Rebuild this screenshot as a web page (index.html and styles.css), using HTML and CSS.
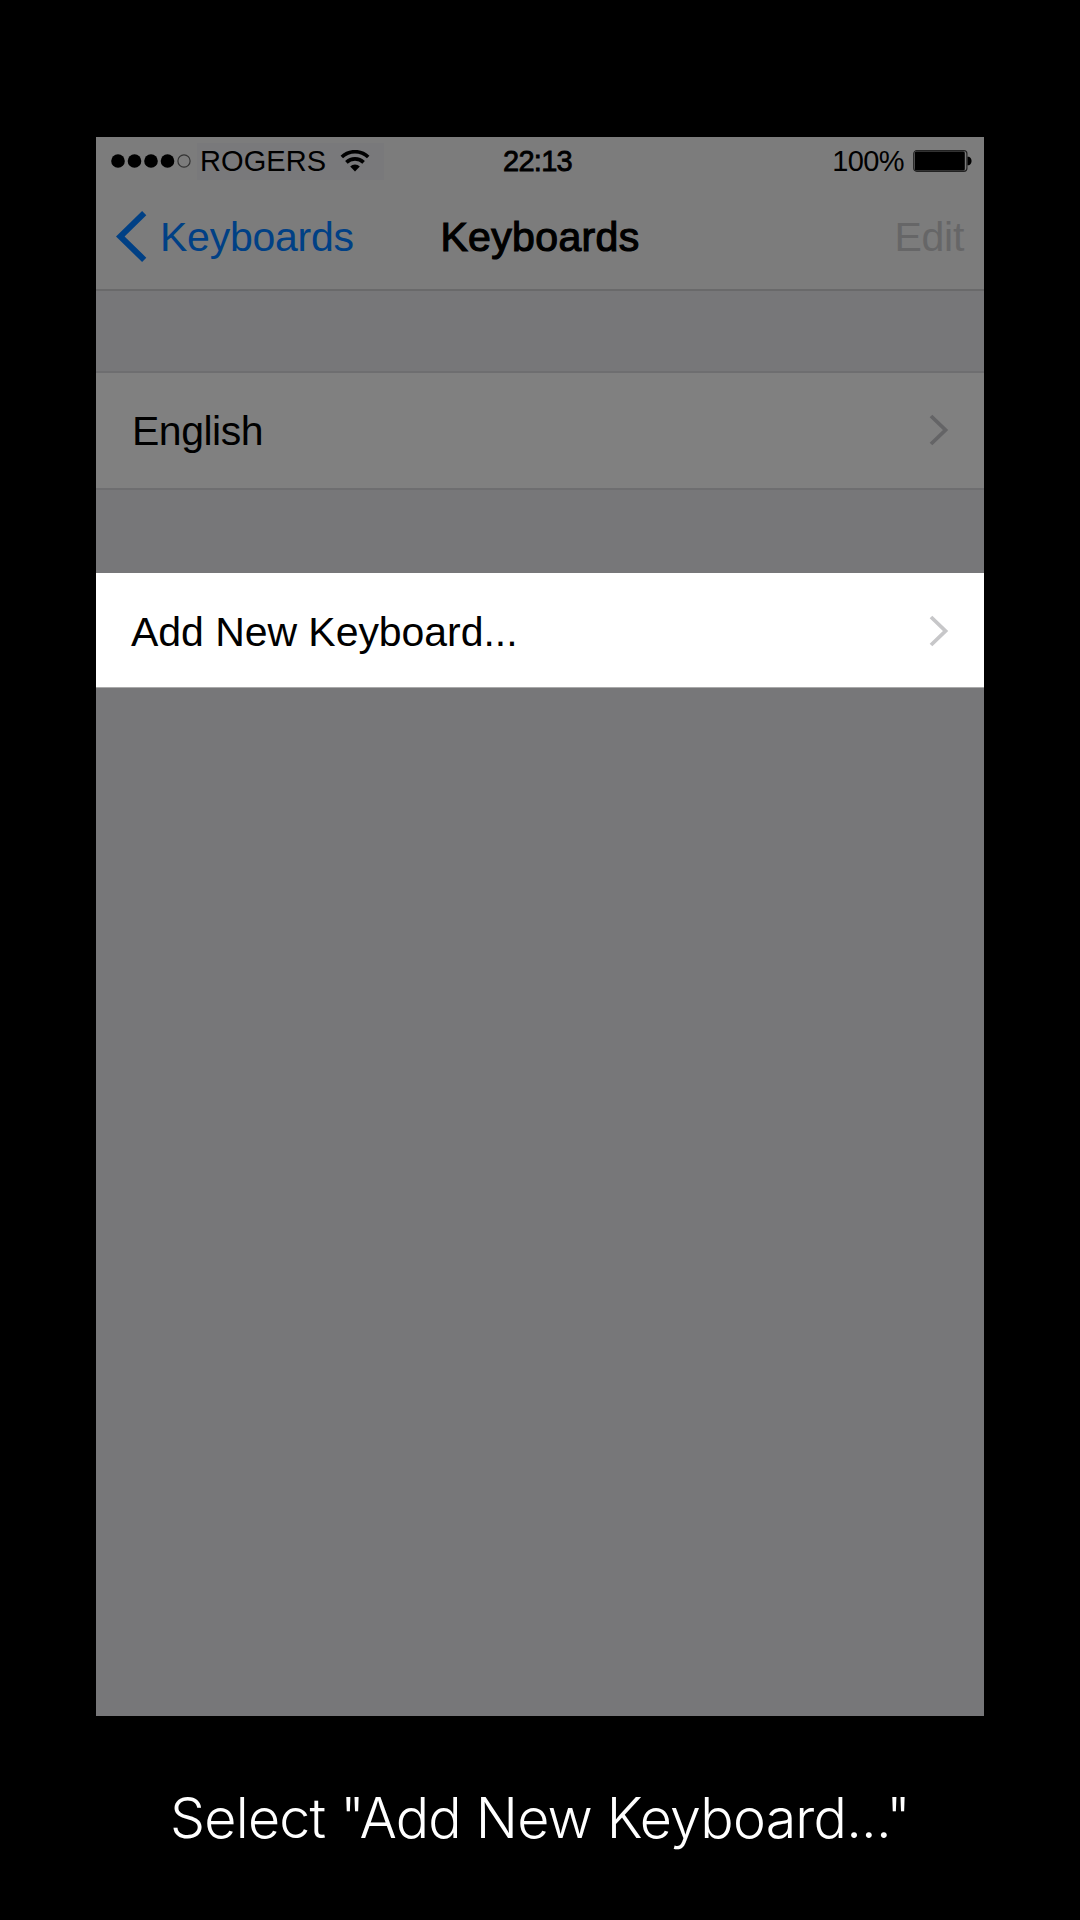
FILE: index.html
```html
<!DOCTYPE html>
<html lang="en">
<head>
<meta charset="utf-8">
<title>Keyboards</title>
<link rel="stylesheet" href="styles.css">
</head>
<body>
<main class="phone">
  <div class="status">
    <div class="status-left">
      <svg class="signal" width="80" height="16" viewBox="0 0 80 16">
        <circle cx="7" cy="8" r="6.8"/><circle cx="23.5" cy="8" r="6.8"/><circle cx="40" cy="8" r="6.8"/><circle cx="56.5" cy="8" r="6.8"/>
        <circle cx="73" cy="8" r="6.1" fill="none" stroke="#333" stroke-width="1.2"/>
      </svg>
      <div class="carrier">
        <span class="carrier-name">ROGERS</span>
        <svg width="30" height="22" viewBox="0 0 30 22">
          <g fill="none" stroke="#000" stroke-width="3.6">
            <path d="M1.8 7A19 19 0 0 1 28.2 7"/>
            <path d="M6.4 12.4A12.2 12.2 0 0 1 23.6 12.4"/>
          </g>
          <path d="M10.2 16.4A6.8 6.8 0 0 1 19.8 16.4L15 21.4Z"/>
        </svg>
      </div>
    </div>
    <span class="time">22:13</span>
    <div class="status-right">
      <span class="percent">100%</span>
      <svg width="59" height="22" viewBox="0 0 59 22">
        <rect x=".7" y=".7" width="53.2" height="20.6" rx="3" fill="none" stroke="#222" stroke-width="1.2"/>
        <rect x="1.8" y="1.6" width="50" height="18.8" rx="1.5"/>
        <path d="M54.5 6.8H56C59.4 8.4 59.4 13.6 56 15.2H54.5Z"/>
      </svg>
    </div>
  </div>
  <nav class="nav">
    <a class="back">
      <svg width="31" height="51" viewBox="0 0 31 51"><path d="M28.2 2.2L4.2 25.5L28.2 48.8" fill="none" stroke="#004085" stroke-width="6"/></svg>
      <span>Keyboards</span>
    </a>
    <h1 class="title">Keyboards</h1>
    <span class="edit">Edit</span>
  </nav>
  <div class="row">
    <span class="english">English</span>
    <svg width="20" height="32" viewBox="0 0 20 32"><path d="M2 2L16.5 16L2 30" fill="none" stroke="#646466" stroke-width="3.8"/></svg>
  </div>
  <div class="row active">
    <span class="add">Add New Keyboard...</span>
    <svg width="20" height="32" viewBox="0 0 20 32"><path d="M2 2L16.5 16L2 30" fill="none" stroke="#c7c7c9" stroke-width="3.8"/></svg>
  </div>
</main>
<p class="caption">Select "Add New Keyboard..."</p>
</body>
</html>
```
FILE: styles.css
```css
* { box-sizing: border-box; }
body {
  margin: 0;
  height: 1920px;
  padding-top: 137px;
  background: #000;
  color: #000;
  font-family: "Liberation Sans", Arial, sans-serif;
  overflow: hidden;
}
svg { display: block; flex: none; }
.phone {
  width: 888px;
  height: 1579px;
  margin: 0 auto;
  background: #777779;
  font-size: 41px;
}
.status, .nav {
  display: grid;
  grid-template-columns: 1fr auto 1fr;
  align-items: center;
  background: #7c7c7c;
}
.status { height: 49px; font-size: 29px; line-height: 37px; }
.status-left { display: flex; align-items: center; padding-left: 15px; }
.signal { margin: -1px 6px 0 0; }
.carrier {
  display: flex;
  align-items: center;
  gap: 13px;
  width: 187px;
  height: 37px;
  padding-left: 3px;
  background: #79797b;
}
.carrier-name { width: 127px; letter-spacing: .1px; }
.carrier svg { margin-top: -2px; }
.time { padding-right: 5px; letter-spacing: -.7px; -webkit-text-stroke: .8px #000; }
.status-right { display: flex; align-items: center; justify-content: flex-end; gap: 9px; padding-right: 12px; }
.status-right svg { margin-top: -1px; }
.percent { letter-spacing: -.6px; }
.nav {
  height: 105px;
  padding: 0 20px 1px;
  border-bottom: 2px solid #69696a;
}
.back { display: flex; align-items: center; gap: 13px; color: #004085; letter-spacing: -.25px; }
.back svg { margin-top: -1px; }
.title { margin: 0; font-size: 41px; font-weight: 400; letter-spacing: .35px; -webkit-text-stroke: 1.2px #000; }
.edit { justify-self: end; color: #666667; letter-spacing: -.3px; }
.row {
  display: flex;
  align-items: center;
  justify-content: space-between;
  height: 119px;
  margin-top: 80px;
  padding: 0 35px;
  background: #808080;
  border: solid #6e6e70;
  border-width: 2px 0;
}
.row svg { margin-top: -1px; }
.row.active { height: 115px; margin-top: 83px; background: #fff; border: 0; border-bottom: 1px solid #aaa; }
.row.active svg { margin-top: 1px; }
.english { padding: 1px 0 0 1px; letter-spacing: -.5px; }
.add { padding-top: 4px; letter-spacing: -.05px; }
.caption {
  margin: 67px 0 0;
  color: #fff;
  font: 300 55.5px/70px Inter, sans-serif;
  letter-spacing: -.78px;
  text-align: center;
  white-space: nowrap;
}
```
